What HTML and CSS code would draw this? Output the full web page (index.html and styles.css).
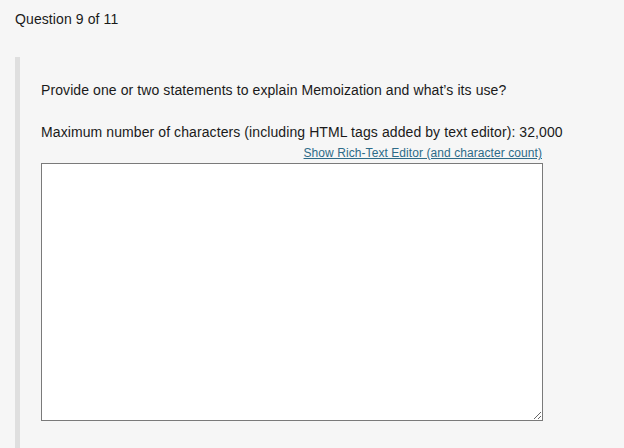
FILE: index.html
```html
<!DOCTYPE html>
<html>
<head>
<meta charset="utf-8">
<link rel="stylesheet" href="styles.css">
</head>
<body>
<div class="page">
  <div class="qnum">Question 9 of 11</div>
  <div class="question">
    <p class="prompt">Provide one or two statements to explain Memoization and what’s its use?</p>
    <p class="limit">Maximum number of characters (including HTML tags added by text editor): 32,000</p>
    <div class="answer">
      <div class="toggle"><a href="#" class="rte-link">Show Rich-Text Editor (and character count)</a></div>
      <textarea class="field"></textarea>
    </div>
  </div>
</div>
</body>
</html>
```
FILE: styles.css
```css
html, body {
  margin: 0;
  padding: 0;
  background: #f6f6f6;
  height: 100%;
  overflow: hidden;
}
body {
  font-family: "Liberation Sans", Arial, Helvetica, sans-serif;
  color: #1a1a1a;
}
.page {
  padding: 11px 0 0 15px;
}
.qnum {
  font-size: 14px;
  line-height: 16px;
  letter-spacing: 0.1px;
}
.question {
  box-sizing: border-box;
  margin-top: 30px;
  border-left: 5px solid #dfdfdf;
  padding: 25px 0 0 21px;
  height: 391px;
}
.prompt, .limit {
  margin: 0;
  font-size: 14px;
  line-height: 16px;
  letter-spacing: 0.09px;
}
.limit {
  margin-top: 26px;
}
.answer {
  width: 502px;
}
.toggle {
  text-align: right;
  font-size: 12px;
  line-height: 14px;
  margin-top: 6px;
  padding-right: 1px;
}
.rte-link {
  color: #2d6b88;
  text-decoration: underline;
  letter-spacing: 0.07px;
}
.field {
  display: block;
  box-sizing: border-box;
  width: 502px;
  height: 258px;
  margin: 3px 0 0 0;
  border: 1px solid #7a7a7a;
  background: #ffffff;
  resize: both;
  padding: 2px;
}
```
